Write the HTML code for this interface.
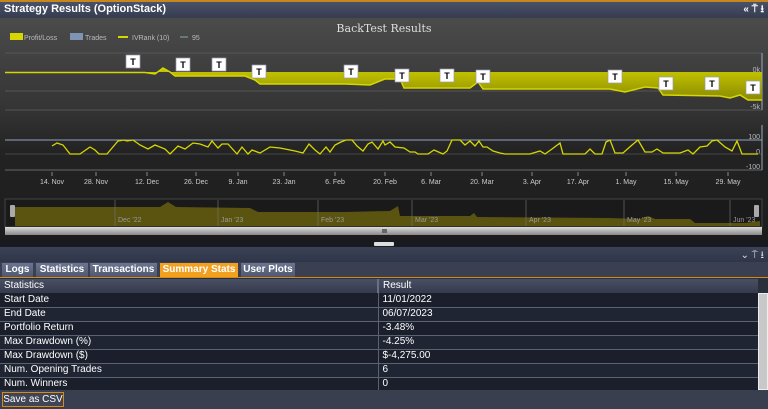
<!DOCTYPE html>
<html><head><meta charset="utf-8"><style>
*{margin:0;padding:0;box-sizing:border-box}
body{width:768px;height:409px;overflow:hidden;background:#2a2f3c;font-family:"Liberation Sans",sans-serif;position:relative}
.abs{position:absolute}
.title{left:0;top:0;width:768px;height:18px;border-top:2px solid #c8871c;background:linear-gradient(#4a5268,#353c50);color:#fff;font-weight:bold;font-size:11px;line-height:15px;padding-left:4px}
.chart{left:0;top:18px;width:768px;height:222px;background:linear-gradient(#4b4b4b,#353535 40%,#232323 60%,#1c1c1c)}
.sep{left:0;top:240px;width:768px;height:7px;background:#181a20}
.bar{left:0;top:247px;width:768px;height:15px;background:linear-gradient(#3c4254,#30364a)}
.tabs{left:0;top:262px;width:768px;height:16px;background:#3a4052;border-bottom:1px solid #d98a12}
.tab{position:absolute;top:1px;height:14px;background:linear-gradient(#6b7590,#4f5873);color:#fff;font-size:10px;font-weight:bold;line-height:14px;text-align:center;white-space:nowrap}
.tab.on{background:#f2a020}
table{position:absolute;left:0;top:279px;width:758px;border-collapse:collapse;font-size:10px;color:#fff}
td{height:14px;line-height:12px;padding-left:4px;border-bottom:1px solid #5c6270;background:#1f2533}
tr:nth-child(even) td{background:#1a1f2b}
th{height:14px;line-height:12px;text-align:left;font-weight:normal;padding-left:4px;background:linear-gradient(#4a5064,#353a4c)}
.foot{left:0;top:390px;width:768px;height:19px;background:#3a3f50}
.btn{left:2px;top:392px;width:62px;height:15px;border:1px solid #d98a12;color:#fff;font-size:10px;line-height:13px;text-align:center;background:#3f4557;white-space:nowrap}
</style></head><body>
<div class="abs title">Strategy Results (OptionStack)<span style="position:absolute;right:4px;top:0;font-size:10px">« ⍑ ⭳</span></div>
<div class="abs chart"></div>
<svg class="abs" style="left:0;top:0" width="768" height="240" font-family="Liberation Sans">
<defs><linearGradient id="g" x1="0" y1="0" x2="0" y2="1"><stop offset="0" stop-color="#ddd"/><stop offset="1" stop-color="#888"/></linearGradient>
<linearGradient id="ay" x1="0" y1="0" x2="0" y2="1"><stop offset="0" stop-color="#c8c800"/><stop offset="1" stop-color="#8a8a00"/></linearGradient></defs>
<text x="384" y="32" fill="#ddd" font-size="11" text-anchor="middle" font-family="DejaVu Serif">BackTest Results</text>
<rect x="10" y="33" width="13" height="7" fill="#d6d600"/><text x="24" y="40" fill="#bbb" font-size="7">Profit/Loss</text>
<rect x="70" y="33" width="13" height="7" fill="#7d95b3"/><text x="85" y="40" fill="#bbb" font-size="7">Trades</text>
<line x1="118" y1="37" x2="128" y2="37" stroke="#d6d600" stroke-width="2"/><text x="132" y="40" fill="#bbb" font-size="7">IVRank (10)</text>
<line x1="180" y1="37" x2="188" y2="37" stroke="#8aa" stroke-width="1"/><text x="192" y="40" fill="#bbb" font-size="7">95</text>
<g stroke="#555" stroke-width="1"><line x1="5" y1="53" x2="762" y2="53"/><line x1="5" y1="91" x2="762" y2="91"/><line x1="5" y1="110" x2="762" y2="110"/></g>
<line x1="762" y1="53" x2="762" y2="110" stroke="#9ab"/>
<path d="M5 72.5 L145 72.5 155 74 163 68 170 72 175 76 245 76 255 80 260 84 345 84 370 85 385 79 400 79 404 88 470 88 478 82 483 89 610 89 625 92 645 87 658 88 663 95 720 96 730 98 740 95 748 100 762 100 L762 72 145 72 Z" fill="url(#ay)"/>
<path d="M5 72.5 L145 72.5 155 74 163 68 170 72 175 76 245 76 255 80 260 84 345 84 370 85 385 79 400 79 404 88 470 88 478 82 483 89 610 89 625 92 645 87 658 88 663 95 720 96 730 98 740 95 748 100 762 100" fill="none" stroke="#d6d600" stroke-width="1.5"/>
<g font-size="9" font-weight="bold" text-anchor="middle">
<g fill="#fff" stroke="#99a" stroke-width="0.7">
<rect x="126" y="55" width="14" height="13"/><rect x="176" y="58" width="14" height="13"/><rect x="212" y="58" width="14" height="13"/><rect x="252" y="65" width="14" height="13"/><rect x="344" y="65" width="14" height="13"/><rect x="395" y="69" width="14" height="13"/><rect x="440" y="69" width="14" height="13"/><rect x="476" y="70" width="14" height="13"/><rect x="608" y="70" width="14" height="13"/><rect x="659" y="77" width="14" height="13"/><rect x="705" y="77" width="14" height="13"/><rect x="746" y="81" width="14" height="13"/></g>
<g fill="#000"><text x="133" y="65">T</text><text x="183" y="68">T</text><text x="219" y="68">T</text><text x="259" y="75">T</text><text x="351" y="75">T</text><text x="402" y="79">T</text><text x="447" y="79">T</text><text x="483" y="80">T</text><text x="615" y="80">T</text><text x="666" y="87">T</text><text x="712" y="87">T</text><text x="753" y="91">T</text></g></g>
<g fill="#bbb" font-size="7" text-anchor="end"><text x="760" y="72">0k</text><text x="760" y="109">-5k</text><text x="760" y="139">100</text><text x="760" y="154">0</text><text x="760" y="169">-100</text></g>
<line x1="5" y1="140" x2="762" y2="140" stroke="#8fa3c0"/>
<line x1="5" y1="154" x2="762" y2="154" stroke="#444"/>
<line x1="5" y1="170" x2="762" y2="170" stroke="#666"/>
<line x1="762" y1="125" x2="762" y2="170" stroke="#9ab"/>
<polyline fill="none" stroke="#d6d600" stroke-width="1.3" points="52,146 57,143 63,145 70,154 80,154 90,147 95,150 99,154 107,154 118,141 124,140 127,141 133,140 140,145 148,149 155,145 165,149 170,154 178,146 185,149 193,143 200,144 208,147 212,141 218,148 222,144 228,144 237,154 242,147 248,154 252,150 260,153 270,147 280,148 295,151 303,153 309,144 315,150 320,154 326,147 330,152 335,145 341,142 346,140 352,140 357,146 363,151 368,144 372,142 378,149 383,141 385,145 390,142 395,147 404,148 410,152 415,152 418,154 428,154 434,150 443,154 447,151 452,140 460,140 465,145 470,141 475,146 479,141 483,147 487,147 493,151 500,153 505,154 530,154 540,151 545,154 552,149 560,143 563,154 585,154 590,149 595,154 602,154 606,142 610,140 615,153 623,153 632,145 638,140 645,152 652,152 657,149 663,153 680,153 688,150 693,154 700,147 707,146 712,141 717,140 725,147 732,151 737,141 742,154 758,154"/>
<g fill="#ccc" font-size="7" text-anchor="middle">
<text x="52" y="184">14. Nov</text><text x="96" y="184">28. Nov</text><text x="147" y="184">12. Dec</text><text x="196" y="184">26. Dec</text><text x="238" y="184">9. Jan</text><text x="284" y="184">23. Jan</text><text x="335" y="184">6. Feb</text><text x="385" y="184">20. Feb</text><text x="431" y="184">6. Mar</text><text x="482" y="184">20. Mar</text><text x="532" y="184">3. Apr</text><text x="578" y="184">17. Apr</text><text x="626" y="184">1. May</text><text x="676" y="184">15. May</text><text x="728" y="184">29. May</text></g>
<g stroke="#888"><line x1="52" y1="172" x2="52" y2="176"/><line x1="96" y1="172" x2="96" y2="176"/><line x1="147" y1="172" x2="147" y2="176"/><line x1="196" y1="172" x2="196" y2="176"/><line x1="238" y1="172" x2="238" y2="176"/><line x1="284" y1="172" x2="284" y2="176"/><line x1="335" y1="172" x2="335" y2="176"/><line x1="385" y1="172" x2="385" y2="176"/><line x1="431" y1="172" x2="431" y2="176"/><line x1="482" y1="172" x2="482" y2="176"/><line x1="532" y1="172" x2="532" y2="176"/><line x1="578" y1="172" x2="578" y2="176"/><line x1="626" y1="172" x2="626" y2="176"/><line x1="676" y1="172" x2="676" y2="176"/><line x1="728" y1="172" x2="728" y2="176"/></g>
<rect x="5" y="199" width="757" height="28" fill="#1a1a1a" stroke="#444"/>
<path d="M15 207 L160 207 168 202 176 207 250 208 258 212 345 212 390 211 398 206 400 216 470 216 474 213 477 217 610 218 640 219 648 216 655 219 690 219 695 223 745 223 760 221 L760 226 15 226 Z" fill="#5a5410"/>
<g stroke="#777" stroke-width="0.6"><line x1="115" y1="200" x2="115" y2="226"/><line x1="218" y1="200" x2="218" y2="226"/><line x1="318" y1="200" x2="318" y2="226"/><line x1="412" y1="200" x2="412" y2="226"/><line x1="526" y1="200" x2="526" y2="226"/><line x1="624" y1="200" x2="624" y2="226"/><line x1="730" y1="200" x2="730" y2="226"/></g>
<g fill="#999" font-size="7"><text x="118" y="222">Dec '22</text><text x="221" y="222">Jan '23</text><text x="321" y="222">Feb '23</text><text x="415" y="222">Mar '23</text><text x="529" y="222">Apr '23</text><text x="627" y="222">May '23</text><text x="733" y="222">Jun '23</text></g>
<rect x="10" y="205" width="5" height="12" fill="#aaa" rx="1"/><rect x="754" y="205" width="5" height="12" fill="#aaa" rx="1"/>
<rect x="5" y="227" width="757" height="8" fill="url(#g)"/>
<rect x="382" y="229" width="5" height="4" fill="#666"/>
</svg>
<div class="abs sep"><div class="abs" style="left:374px;top:2px;width:20px;height:4px;background:#ddd;border-radius:1px"></div></div>
<div class="abs bar"><span style="position:absolute;right:4px;top:1px;color:#ddd;font-size:10px">⌄ ⍑ ⭳</span></div>
<div class="abs tabs">
<div class="tab" style="left:2px;width:31px">Logs</div>
<div class="tab" style="left:36px;width:52px">Statistics</div>
<div class="tab" style="left:90px;width:67px">Transactions</div>
<div class="tab on" style="left:160px;width:78px">Summary Stats</div>
<div class="tab" style="left:241px;width:54px">User Plots</div>
</div>
<table>
<tr><th style="width:378px;border-right:2px solid #6a7080">Statistics</th><th>Result</th></tr>
<tr><td style="border-right:1px solid #5c6270">Start Date</td><td>11/01/2022</td></tr>
<tr><td style="border-right:1px solid #5c6270">End Date</td><td>06/07/2023</td></tr>
<tr><td style="border-right:1px solid #5c6270">Portfolio Return</td><td>-3.48%</td></tr>
<tr><td style="border-right:1px solid #5c6270">Max Drawdown (%)</td><td>-4.25%</td></tr>
<tr><td style="border-right:1px solid #5c6270">Max Drawdown ($)</td><td>$-4,275.00</td></tr>
<tr><td style="border-right:1px solid #5c6270">Num. Opening Trades</td><td>6</td></tr>
<tr><td style="border-right:1px solid #5c6270">Num. Winners</td><td>0</td></tr>
</table>
<div class="abs" style="left:758px;top:293px;width:10px;height:97px;background:#c8c8c8;border:1px solid #eee"></div>
<div class="abs foot"></div>
<div class="abs btn">Save as CSV</div>
</body></html>
